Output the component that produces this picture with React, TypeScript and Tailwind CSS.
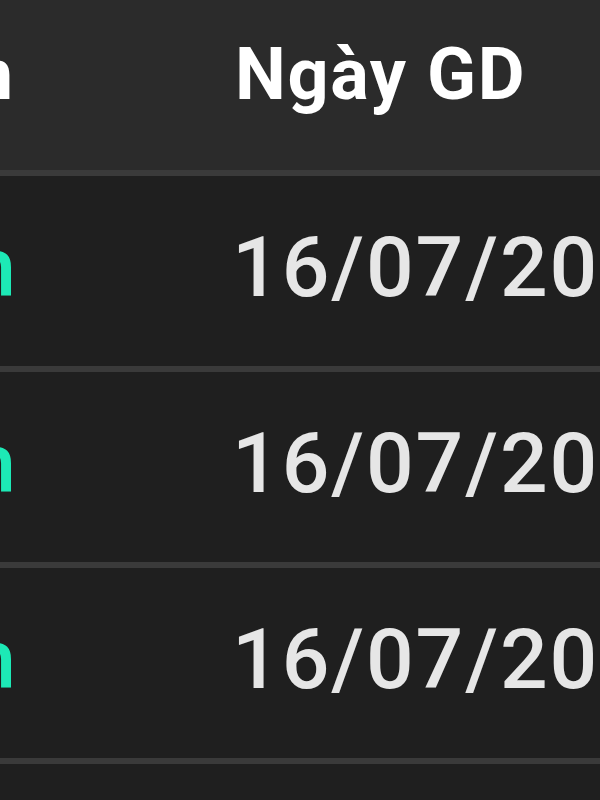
import React from 'react';

const rows = [
    { method: 'Chuyển khoản', date: '16/07/2024' },
    { method: 'Chuyển khoản', date: '16/07/2024' },
    { method: 'Chuyển khoản', date: '16/07/2024' },
    { method: 'Chuyển khoản', date: '16/07/2024' },
];

export default function App() {
    return (
        <div className="w-[600px] h-[800px] overflow-hidden bg-[#1f1f1f] font-['Roboto',sans-serif]">
            <div className="grid grid-cols-[13px_1fr] h-[176px] bg-[#2b2b2b] border-b-[6px] border-[#3a3a3a]">
                <div className="flex items-center justify-end overflow-hidden pb-[20px]">
                    <span className="shrink-0 whitespace-nowrap text-[72px] font-bold text-white">Phương thức thanh toán</span>
                </div>
                <div className="flex items-center overflow-hidden pl-[222px] pb-[20px]">
                    <span className="shrink-0 whitespace-nowrap text-[72px] font-bold tracking-[1.6px] text-white">Ngày GD</span>
                </div>
            </div>
            {rows.map((row, i) => (
                <div
                    key={i}
                    className="grid grid-cols-[16px_1fr] h-[196px] border-b-[6px] border-[#3a3a3a]"
                >
                    <div className="flex items-center justify-end overflow-hidden pb-[6px]">
                        <span className="shrink-0 whitespace-nowrap text-[84px] font-medium text-[#1de9b6]">{row.method}</span>
                    </div>
                    <div className="flex items-center overflow-hidden pl-[216px] pb-[6px]">
                        <span className="shrink-0 whitespace-nowrap text-[84px] font-medium tracking-[1.9px] text-[#e6e6e6]">{row.date}</span>
                    </div>
                </div>
            ))}
        </div>
    );
}
